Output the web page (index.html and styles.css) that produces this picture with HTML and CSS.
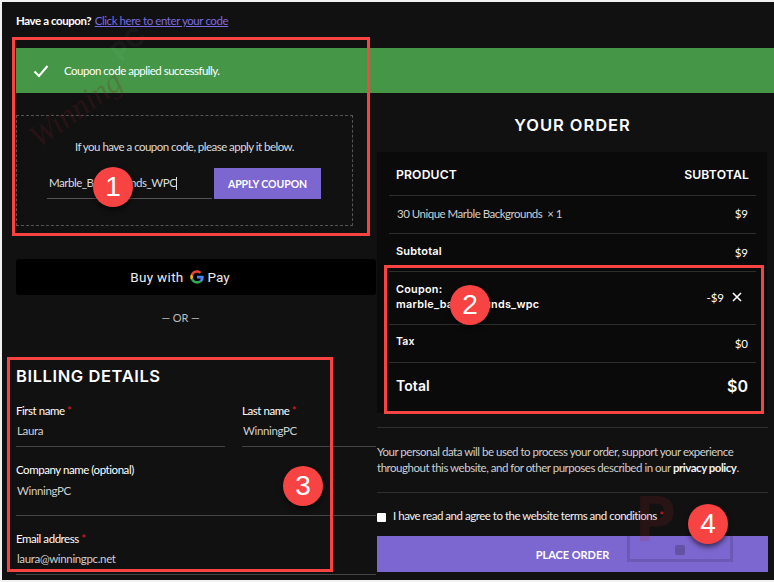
FILE: index.html
```html
<!DOCTYPE html>
<html lang="en">
<head>
<meta charset="utf-8">
<title>Checkout</title>
<link rel="stylesheet" href="styles.css">
</head>
<body>
<div class="page">
  <p class="coupon-prompt"><strong>Have a coupon?</strong> <a href="#">Click here to enter your code</a></p>
  <div class="notice">
    <svg class="check" viewBox="0 0 16 14" width="16" height="14"><path d="M1.5 7.5 L6 12 L14.5 2" fill="none" stroke="#fff" stroke-width="2"/></svg>
    <span>Coupon code applied successfully.</span>
  </div>
  <div class="columns">
    <div class="left">
      <form class="coupon-box">
        <p>If you have a coupon code, please apply it below.</p>
        <div class="coupon-row">
          <div class="coupon-input">Marble_Backgrounds_WPC<i class="caret"></i></div>
          <div class="btn apply">APPLY COUPON</div>
        </div>
      </form>
      <div class="gpay">
        <span>Buy with</span>
        <svg viewBox="0 0 48 48" width="14" height="14"><path fill="#EA4335" d="M24 9.500c3.900 0 6.900 1.700 8.700 3.100l6.300-6.100C35.200 3 30.100 1 24 1 14.800 1 7 6.300 3.200 13.900l7.400 5.700C12.400 13.700 17.700 9.500 24 9.500z"/><path fill="#4285F4" d="M47 24.500c0-1.700-.2-3-.5-4.500H24v8.900h13c-.3 2.100-1.700 5.400-4.900 7.500l7.300 5.600C43.700 38 47 31.800 47 24.500z"/><path fill="#FBBC05" d="M10.600 28.400C10.100 27 9.900 25.500 9.900 24s.3-3 .7-4.400l-7.400-5.700C1.800 17 1 20.400 1 24s.8 7 2.200 10.100l7.400-5.700z"/><path fill="#34A853" d="M24 47c6.200 0 11.400-2 15.200-5.600l-7.300-5.600c-1.900 1.400-4.600 2.300-7.900 2.300-6.300 0-11.600-4.200-13.400-10l-7.400 5.700C7 41.700 14.800 47 24 47z"/></svg>
        <span class="pay">Pay</span>
      </div>
      <p class="or">— OR —</p>
      <h2 class="billing">BILLING DETAILS</h2>
      <div class="name-row">
        <div class="field"><label>First name <em>*</em></label><div class="value">Laura</div></div>
        <div class="field"><label>Last name <em>*</em></label><div class="value">WinningPC</div></div>
      </div>
      <div class="field company"><label>Company name (optional)</label><div class="value">WinningPC</div></div>
      <div class="field email"><label>Email address <em>*</em></label><div class="value">laura@winningpc.net</div></div>
    </div>
    <div class="right">
      <h2 class="order-title">YOUR ORDER</h2>
      <div class="order-panel">
        <div class="row head"><span>PRODUCT</span><span>SUBTOTAL</span></div>
        <div class="row item"><span>30 Unique Marble Backgrounds &nbsp;× 1</span><span class="amt">$9</span></div>
        <div class="row sub"><b>Subtotal</b><span class="amt">$9</span></div>
        <div class="row coupon"><b>Coupon:<br>marble_backgrounds_wpc</b><span class="amt">-$9<svg class="x" viewBox="0 0 10 10" width="10" height="10"><path d="M1 1 L9 9 M9 1 L1 9" stroke="#fff" stroke-width="1.600"/></svg></span></div>
        <div class="row tax"><b>Tax</b><span class="amt">$0</span></div>
        <div class="row total"><b>Total</b><span>$0</span></div>
      </div>
      <p class="privacy">Your personal data will be used to process your order, support your experience throughout this website, and for other purposes described in our <strong>privacy policy</strong>.</p>
      <label class="terms"><input type="checkbox"><span>I have read and agree to the website terms and conditions <em>*</em></span></label>
      <div class="btn place">PLACE ORDER</div>
    </div>
  </div>

  <div class="wm wm-text">Winning</div>
  <div class="wm wm-pc">PC</div>
  <div class="wm wm-p">P</div>
  <div class="wm wm-box"></div>
  <div class="wm wm-dot"></div>

  <div class="mark mark1"></div>
  <div class="mark mark2"></div>
  <div class="mark mark3"></div>
  <div class="num n1">1</div>
  <div class="num n2">2</div>
  <div class="num n3">3</div>
  <div class="num n4">4</div>
</div>
</body>
</html>
```

FILE: styles.css
```css
* { box-sizing: border-box; }
html, body { margin: 0; padding: 0; }
body { width: 774px; height: 582px; overflow: hidden; background: #f1f1f1; font-family: "Lato", sans-serif; color: #e8e8e8; }
.page { position: relative; margin: 2px 0 0 2px; width: 772px; height: 578px; background: #111112; padding: 0 0 0 14px; overflow: hidden; font-size: 11.5px; }
p { margin: 0; }
em { color: #e01b1b; font-style: normal; }

.coupon-prompt { height: 46px; padding-top: 12px; line-height: 14px; color: #fff; font-size: 11.5px; letter-spacing: -0.42px; }
.coupon-prompt a { color: #7b6be0; margin-left: 1px; }
.coupon-prompt strong { font-weight: 700; }

.notice { height: 45px; background: #459647; color: #fff; display: flex; align-items: center; padding-left: 17px; font-size: 11.5px; letter-spacing: -0.5px; }
.notice .check { margin-right: 15px; }

.columns { display: grid; grid-template-columns: 360px 391px; column-gap: 1px; }

.coupon-box { margin-top: 22px; width: 337px; height: 111px; border: 1px dashed #555; padding-top: 24px; text-align: center; font-size: 11.5px; color: #dcdcdc; letter-spacing: -0.53px; }
.coupon-row { display: flex; gap: 2px; margin: 15px 0 0 30px; text-align: left; }
.coupon-input { width: 165px; height: 31px; border-bottom: 1px solid #555; padding: 8px 0 0 2px; font-size: 11.5px; color: #ddd; letter-spacing: -0.47px; line-height: 14px; white-space: nowrap; }
.caret { display: inline-block; width: 1px; height: 13px; background: #ddd; vertical-align: -3px; }
.btn { background: #7c66cf; color: #fff; font-weight: 700; display: flex; align-items: center; justify-content: center; font-size: 10.5px; letter-spacing: -0.05px; }
.apply { width: 107px; height: 31px; }

.gpay { margin-top: 33px; height: 36px; padding-right: 32px; background: #000; border-radius: 3px; color: #ececec; display: flex; align-items: center; justify-content: center; gap: 5px; font-family: "Roboto", sans-serif; font-size: 13.5px; letter-spacing: 0.3px; }
.gpay svg { margin-left: 1px; }
.gpay .pay { margin-left: -1px; letter-spacing: 0; }

.or { margin-top: 16px; height: 14px; line-height: 14px; text-align: center; padding-right: 31px; color: #bbb; font-size: 11px; letter-spacing: -0.1px; }

.billing { margin: 41px 0 0; font-family: "Inter", sans-serif; font-weight: 600; font-size: 16.5px; line-height: 20px; color: #fff; letter-spacing: 0.6px; white-space: nowrap; }

.name-row { display: grid; grid-template-columns: 209px 134px; column-gap: 17px; margin-top: 18px; }
.field label { display: block; color: #fff; font-size: 11.5px; line-height: 14px; letter-spacing: -0.45px; }
.field .value { padding: 5px 0 0 1px; height: 29px; line-height: 15px; color: #cfcfcf; border-bottom: 1px solid #444; font-size: 11.5px; letter-spacing: -0.35px; }
.company { margin-top: 16px; }
.company .value { height: 39px; padding-top: 6px; }
.email { margin-top: 16px; }
.email .value { height: 29px; }

.order-title { margin: 21px 0 0; height: 22px; line-height: 22px; text-align: center; font-family: "Inter", sans-serif; font-weight: 600; font-size: 16.5px; letter-spacing: 0.95px; color: #fff; }
.order-panel { margin-top: 16px; background: #0a0a0b; padding: 0 11px 0 12px; height: 261px; margin-right: 1px; }
.row { display: flex; justify-content: space-between; align-items: center; border-bottom: 1px solid #2e2e2e; padding: 0 8px 0 7px; color: #fff; }
.row b { font-family: "Inter", sans-serif; font-weight: 600; font-size: 10.5px; line-height: 15px; letter-spacing: 0.18px; }
.row.head { height: 44px; font-family: "Inter", sans-serif; font-weight: 600; font-size: 12.2px; letter-spacing: 0.15px; padding-top: 1px; padding-right: 7px; }
.row.item { height: 38px; color: #cfcfcf; letter-spacing: -0.5px; padding-left: 8px; padding-bottom: 2px; }
.row.item .amt { letter-spacing: 0; }
.row.sub { height: 38px; }
.row.sub b { margin-top: -2px; font-size: 11px; }
.row.coupon { height: 53px; padding-bottom: 2px; }
.row.coupon b { font-size: 10.8px; letter-spacing: 0.27px; }
.row.tax { height: 38px; }
.row.tax b { margin-top: -4px; }
.row.total { height: 47px; padding-bottom: 2px; border-bottom: 0; }
.row.total b { font-size: 14px; letter-spacing: 0.1px; }
.row.total span { font-family: "Inter", sans-serif; font-weight: 600; font-size: 16px; }
.amt { color: #fff; font-size: 11.5px; display: inline-flex; align-items: center; }
.x { margin-left: 8px; margin-right: 6px; }

.privacy { margin-top: 14px; border-top: 1px solid #2e2e2e; padding-top: 16px; height: 65px; line-height: 16px; color: #cfcfcf; font-size: 11.5px; letter-spacing: -0.48px; }
.privacy strong { color: #f2f2f2; font-weight: 700; }
.terms { display: flex; align-items: center; border-top: 1px solid #2e2e2e; padding-top: 3px; height: 44px; color: #f2f2f2; letter-spacing: -0.48px; font-size: 11.5px; line-height: 14px; }
.terms input { margin: 2px 7px 0 0; width: 9px; height: 9px; appearance: none; background: #fff; border-radius: 1px; }
.place { height: 36px; font-size: 11px; }

.wm { position: absolute; pointer-events: none; }
.wm-text { left: 30px; top: 122px; font-family: "Liberation Serif", serif; font-style: italic; font-size: 32px; line-height: 32px; color: rgba(125, 25, 35, .22); transform: rotate(-36deg); transform-origin: left center; }
.wm-pc { left: 108px; top: 26px; font-family: "Inter", sans-serif; font-size: 26px; font-weight: 700; color: rgba(255,255,255,.05); transform: rotate(-42deg); }
.wm-p { left: 634px; top: 486px; font-family: "Inter", sans-serif; font-size: 62px; line-height: 62px; font-weight: 700; color: rgba(160,30,40,.16); }
.wm-box { left: 625px; top: 534px; width: 106px; height: 26px; border: 3px solid rgba(0,0,0,.12); border-top: 0; }
.wm-dot { left: 673px; top: 543px; width: 10px; height: 10px; border-radius: 2px; background: rgba(0,0,0,.2); }

.mark { position: absolute; border: 3px solid #f84343; }
.mark1 { left: 10px; top: 35px; width: 358px; height: 199px; }
.mark2 { left: 382px; top: 263px; width: 380px; height: 149px; }
.mark3 { left: 5px; top: 355px; width: 326px; height: 215px; }

.num { position: absolute; width: 40px; height: 40px; border-radius: 50%; background: #f84343; color: #fff; font-family: "Liberation Sans", sans-serif; font-size: 28px; line-height: 40px; text-align: center; box-shadow: 0 3px 5px rgba(0,0,0,.55); }
.n1 { left: 91px; top: 165px; }
.n2 { left: 448px; top: 283px; }
.n3 { left: 281px; top: 464px; }
.n4 { left: 686px; top: 502px; }
```
